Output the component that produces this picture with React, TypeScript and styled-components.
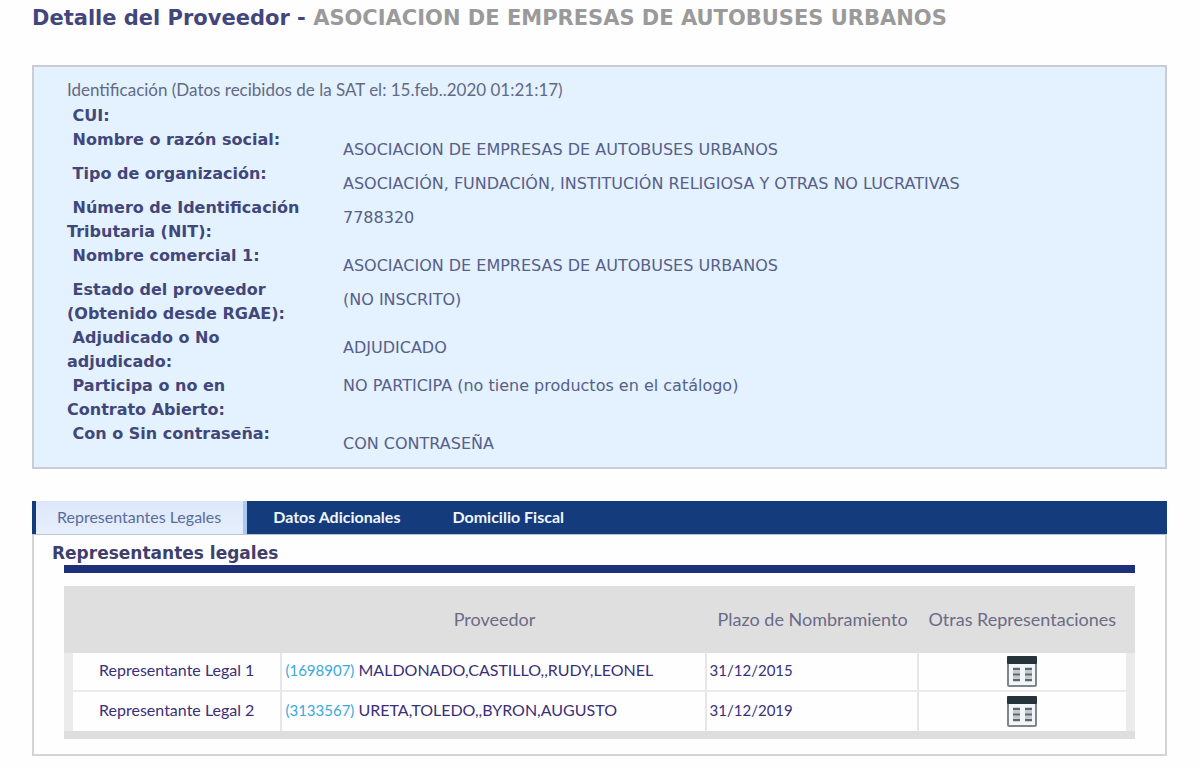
import React, { useState } from "react";
import styled, { createGlobalStyle } from "styled-components";

const GlobalStyle = createGlobalStyle`
  * { box-sizing: border-box; }
  body {
    margin: 0;
    background: #fefefe;
    color: #3b3f73;
    font: 16px/24px "DejaVu Sans", Verdana, sans-serif;
  }
`;

const humanist = `Lato, "Avenir Next", sans-serif`;

const Page = styled.main`
  padding: 6px 33px 12px 32px;
`;

const Title = styled.h1`
  margin: 0 0 35px;
  font-size: 21px;
  line-height: 24px;
  color: #43467c;
`;

const ProviderName = styled.span`
  color: #9a9a9a;
`;

const Identification = styled.section`
  padding: 11px 33px;
  border: 2px solid #c9ccd2;
  background: #e4f1fe;
  margin-bottom: 32px;
`;

const Source = styled.p`
  margin: 0;
  font: 17px/24px ${humanist};
  color: #626a86;
`;

const Details = styled.dl`
  margin: 2px 0 0;
`;

const Detail = styled.div<{ $tall: boolean }>`
  display: grid;
  grid-template-columns: 236px 1fr;
  column-gap: 40px;
  min-height: ${(p) => (p.$tall ? 34 : 24)}px;
`;

const Label = styled.dt`
  font-weight: bold;
  color: #42477a;
`;

const Value = styled.dd<{ $lowered: boolean }>`
  margin: 0;
  padding-top: ${(p) => (p.$lowered ? 10 : 0)}px;
  color: #566089;
`;

const TabBar = styled.div`
  display: flex;
  height: 33px;
  padding-left: 4px;
  background: #143c7c;
`;

const Tab = styled.button<{ $active: boolean }>`
  border: 0;
  padding: 0 26px 2px;
  font: ${(p) => (p.$active ? "normal" : "bold")} 16px/24px ${humanist};
  color: ${(p) => (p.$active ? "#5a6b9c" : "#f0f5ff")};
  background: ${(p) => (p.$active ? "linear-gradient(#dce8fa, #e6effd)" : "transparent")};
  cursor: pointer;

  &[aria-selected="true"] {
    padding: 0 22px 2px 21px;
    border-right: 4px solid #a9c8f2;
  }
`;

const TabPanel = styled.section`
  padding: 6px 30px 15px;
  border: 2px solid #d3d4d6;
  border-top: 1px solid #b9c6da;
`;

const PanelTitle = styled.h2`
  margin: 0 0 0 -12px;
  font-size: 17px;
  line-height: 24px;
  color: #3f3f6c;
`;

const Rule = styled.hr`
  height: 8px;
  margin: 0 0 13px;
  border: 0;
  background: #1d3178;
`;

const Table = styled.table`
  width: 100%;
  table-layout: fixed;
  border-spacing: 0;
  border-bottom: 8px solid #dedede;
  font: 16px/24px ${humanist};
`;

const HeadCell = styled.th`
  height: 67px;
  padding: 0 0 2px;
  font-size: 18px;
  font-weight: normal;
  background: #dfdfdf;
  color: #6b6b87;
  white-space: nowrap;
  &:last-child { padding-right: 9px; }
`;

const Cell = styled.td<{ $center?: boolean; $numeric?: boolean }>`
  height: 39px;
  padding: 0 3px 4px;
  font-size: ${(p) => (p.$numeric ? 15 : 16)}px;
  text-align: ${(p) => (p.$center ? "center" : "left")};
  border-right: 2px solid #e6e6e6;
  border-bottom: 2px solid #ebebeb;
  color: #3a2f78;
  &:last-child { border-right: 9px solid #ebebeb; }
  tr:last-child > & { border-bottom: 0; }
`;

const RowHead = styled(Cell).attrs({ as: "th", scope: "row" })`
  font-weight: normal;
  border-left: 9px solid #ebebeb;
`;

const IconCell = styled(Cell)`
  padding: 0;
`;

const IdLink = styled.a`
  font-size: 15px;
  color: #3aa9dc;
  text-decoration: none;
`;

const IconButton = styled.button`
  display: block;
  margin: 0 auto;
  padding: 0;
  border: 0;
  background: none;
  cursor: pointer;
  svg { display: block; }
`;

const SheetIcon = () => (
  <svg width="30" height="31" viewBox="0 0 30 31" aria-hidden="true">
    <rect x="1" y="1" width="28" height="29" rx="1" fill="#f3f6f8" stroke="#7d868d" strokeWidth="2" />
    <rect x="0" y="0" width="30" height="8" rx="1" fill="#25333b" />
    <path d="M6 13h7M6 18.500h7M6 24h7M18 13h7M18 18.500h7M18 24h7" stroke="#5d6870" strokeWidth="2.500" />
    <path d="M6 15.700h7M6 21.300h7M18 15.700h7M18 21.300h7" stroke="#c3cacf" strokeWidth="3" />
  </svg>
);

const details = [
  { label: "CUI:", value: "", tall: false, lowered: false },
  { label: "Nombre o razón social:", value: "ASOCIACION DE EMPRESAS DE AUTOBUSES URBANOS", tall: true, lowered: true },
  { label: "Tipo de organización:", value: "ASOCIACIÓN, FUNDACIÓN, INSTITUCIÓN RELIGIOSA Y OTRAS NO LUCRATIVAS", tall: true, lowered: true },
  { label: "Número de Identificación Tributaria (NIT):", value: "7788320", tall: true, lowered: true },
  { label: "Nombre comercial 1:", value: "ASOCIACION DE EMPRESAS DE AUTOBUSES URBANOS", tall: true, lowered: true },
  { label: "Estado del proveedor (Obtenido desde RGAE):", value: "(NO INSCRITO)", tall: true, lowered: true },
  { label: "Adjudicado o No adjudicado:", value: "ADJUDICADO", tall: true, lowered: true },
  { label: "Participa o no en Contrato Abierto:", value: "NO PARTICIPA (no tiene productos en el catálogo)", tall: true, lowered: false },
  { label: "Con o Sin contraseña:", value: "CON CONTRASEÑA", tall: true, lowered: true },
];

const tabs = ["Representantes Legales", "Datos Adicionales", "Domicilio Fiscal"];

const representatives = [
  { role: "Representante Legal 1", id: "(1698907)", name: "MALDONADO,CASTILLO,,RUDY,LEONEL", date: "31/12/2015" },
  { role: "Representante Legal 2", id: "(3133567)", name: "URETA,TOLEDO,,BYRON,AUGUSTO", date: "31/12/2019" },
];

export default function App() {
  const [active, setActive] = useState(0);
  return (
    <Page>
      <GlobalStyle />
      <Title>
        Detalle del Proveedor - <ProviderName>ASOCIACION DE EMPRESAS DE AUTOBUSES URBANOS</ProviderName>
      </Title>
      <Identification>
        <Source>Identificación (Datos recibidos de la SAT el: 15.feb..2020 01:21:17)</Source>
        <Details>
          {details.map((d) => (
            <Detail key={d.label} $tall={d.tall}>
              <Label>{"\u00a0" + d.label}</Label>
              <Value $lowered={d.lowered}>{d.value}</Value>
            </Detail>
          ))}
        </Details>
      </Identification>
      <TabBar role="tablist">
        {tabs.map((t, i) => (
          <Tab key={t} type="button" role="tab" aria-selected={i === active} $active={i === active} onClick={() => setActive(i)}>
            {t}
          </Tab>
        ))}
      </TabBar>
      <TabPanel role="tabpanel">
        <PanelTitle>Representantes legales</PanelTitle>
        <Rule />
        <Table>
          <colgroup>
            <col style={{ width: "20.4%" }} />
            <col style={{ width: "39.6%" }} />
            <col style={{ width: "19.8%" }} />
            <col />
          </colgroup>
          <thead>
            <tr>
              <HeadCell as="td" />
              <HeadCell scope="col">Proveedor</HeadCell>
              <HeadCell scope="col">Plazo de Nombramiento</HeadCell>
              <HeadCell scope="col">Otras Representaciones</HeadCell>
            </tr>
          </thead>
          <tbody>
            {representatives.map((r) => (
              <tr key={r.id}>
                <RowHead $center>{r.role}</RowHead>
                <Cell>
                  <IdLink href="#">{r.id}</IdLink> {r.name}
                </Cell>
                <Cell $numeric>{r.date}</Cell>
                <IconCell>
                  <IconButton type="button" aria-label={"Otras representaciones de " + r.name}>
                    <SheetIcon />
                  </IconButton>
                </IconCell>
              </tr>
            ))}
          </tbody>
        </Table>
      </TabPanel>
    </Page>
  );
}
